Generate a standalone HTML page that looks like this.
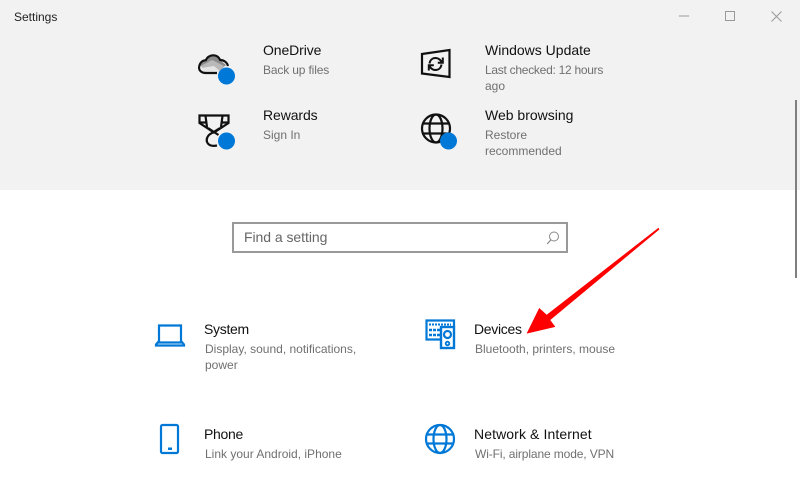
<!DOCTYPE html>
<html>
<head>
<meta charset="utf-8">
<style>
html,body{margin:0;padding:0;width:800px;height:500px;overflow:hidden;background:#fff}
body{position:relative;font-family:"Liberation Sans",sans-serif}
.t,.s{position:absolute;white-space:nowrap;line-height:16px}
.t{font-size:14px;color:#111}
.s{font-size:12px;color:#707070}
svg{position:absolute;left:0;top:0}
</style>
</head>
<body>
<div style="position:absolute;left:0;top:0;width:800px;height:190px;background:#f2f2f2"></div>
<div class="s" style="left:14px;top:9px;color:#222;font-size:12px">Settings</div>

<div class="t" style="left:263px;top:42px;letter-spacing:-.1px">OneDrive</div>
<div class="s" style="left:263px;top:62px;letter-spacing:-.15px">Back up files</div>
<div class="t" style="left:263px;top:107px;letter-spacing:-.1px">Rewards</div>
<div class="s" style="left:263px;top:127px">Sign In</div>
<div class="t" style="left:485px;top:42px">Windows Update</div>
<div class="s" style="left:485px;top:62px;letter-spacing:-.27px">Last checked: 12 hours</div>
<div class="s" style="left:485px;top:78px">ago</div>
<div class="t" style="left:485px;top:107px">Web browsing</div>
<div class="s" style="left:485px;top:127px">Restore</div>
<div class="s" style="left:485px;top:143px">recommended</div>

<div style="position:absolute;left:232px;top:222px;width:332px;height:27px;border:2px solid #999;background:#fff"></div>
<div style="position:absolute;left:244px;top:229px;font-size:14px;line-height:17px;color:#666;white-space:nowrap;letter-spacing:-.05px">Find a setting</div>

<div class="t" style="left:204px;top:321px;letter-spacing:-.3px">System</div>
<div class="s" style="left:205px;top:341px">Display, sound, notifications,</div>
<div class="s" style="left:205px;top:357px">power</div>
<div class="t" style="left:474px;top:321px;letter-spacing:-.3px">Devices</div>
<div class="s" style="left:475px;top:341px">Bluetooth, printers, mouse</div>
<div class="t" style="left:204px;top:426px;letter-spacing:-.3px">Phone</div>
<div class="s" style="left:205px;top:446px">Link your Android, iPhone</div>
<div class="t" style="left:474px;top:426px;letter-spacing:.1px">Network &amp; Internet</div>
<div class="s" style="left:475px;top:446px;letter-spacing:-.12px">Wi-Fi, airplane mode, VPN</div>

<svg width="800" height="500" viewBox="0 0 800 500" fill="none">
  <!-- window controls -->
  <path d="M679 16H689" stroke="#999" stroke-width="1"/>
  <rect x="725.5" y="11.5" width="9" height="9" stroke="#999" stroke-width="1"/>
  <path d="M771.5 11.5L781.500 21.500M781.500 11.500L771.500 21.500" stroke="#999" stroke-width="1"/>
  <!-- scrollbar -->
  <rect x="795" y="100" width="2" height="178" fill="#7f7f7f"/>

  <!-- OneDrive -->
  <path d="M201 66C200 61 204 60 206 60C208 55 217 54 220 60L226 65L218 72H206Z" fill="#8c8c8c"/>
  <path d="M201 66L212 60L224 66L218 72H204Z" fill="#b9b9b9"/>
  <path d="M201 68L214 66L221 72H204Z" fill="#e4e4e4"/>
  <path d="M217 73H206C200.500 73 198.500 69.500 199.200 66.500C200 62.500 202.500 60.500 205.800 60.200C208.500 54.500 217 53 220.200 60C223.500 60 227 62 228 66" stroke="#111" stroke-width="2.200"/>
  <circle cx="226.500" cy="76" r="8.500" fill="#0078d7"/>

  <!-- Rewards -->
  <path d="M199.500 115.500H228.500V123L214 132.500L199.500 123Z" stroke="#111" stroke-width="2.200" stroke-linejoin="miter"/>
  <path d="M205.500 116L207 127M222.500 116L221 127M200 122.500H206M222 122.500H228" stroke="#111" stroke-width="2.200"/>
  <path d="M208 128L218.500 135M220 128L212 133C207.500 135 206 139 207 142C208.500 145.500 212 146.500 217 145.500" stroke="#111" stroke-width="2.200"/>
  <circle cx="226.500" cy="141" r="8.500" fill="#0078d7"/>

  <!-- Windows Update -->
  <path d="M422 54L449.500 50V77L422 73.500Z" stroke="#111" stroke-width="2.200"/>
  <path d="M429.500 63.500C430 60 432.500 58 435.500 58C438 58 439.500 59 441 61L442.500 62.500M442.800 57.500V62.800H437.800" stroke="#111" stroke-width="2"/>
  <path d="M441.500 64.500C441 68 438.500 70 435.500 70C433 70 431.500 69 430 67L428.800 65.500M428.800 70.500V65.300H433.800" stroke="#111" stroke-width="2"/>

  <!-- Web browsing -->
  <circle cx="436" cy="128.500" r="14" stroke="#111" stroke-width="2.200"/>
  <ellipse cx="436" cy="128.500" rx="6.500" ry="14" stroke="#111" stroke-width="2.200"/>
  <path d="M423 123.500H449M423 133.500H449" stroke="#111" stroke-width="2.200"/>
  <circle cx="448.500" cy="141" r="8.500" fill="#0078d7"/>

  <!-- search icon -->
  <circle cx="554" cy="236.500" r="4.500" stroke="#888" stroke-width="1"/>
  <path d="M550.700 240L547.200 244" stroke="#888" stroke-width="1.200"/>

  <!-- System -->
  <path d="M159 325.500H181V342.500H159Z" stroke="#0078d7" stroke-width="2.200"/>
  <path d="M159 341L156 344.500V345.500H184V344.500L181 341" stroke="#0078d7" stroke-width="2.200"/>

  <!-- Devices -->
  <path d="M441 339.500H426.500V320.500H454V327" stroke="#0078d7" stroke-width="2.200"/>
  <path d="M429 324.500H451" stroke="#0078d7" stroke-width="2" stroke-dasharray="2 1"/>
  <path d="M429 330H441M429 335H441" stroke="#0078d7" stroke-width="2.500" stroke-dasharray="3 1"/>
  <rect x="441" y="327" width="13" height="21" fill="#fff" stroke="#0078d7" stroke-width="2.400"/>
  <circle cx="447.500" cy="334.500" r="3.500" stroke="#0078d7" stroke-width="2.200"/>
  <circle cx="447.500" cy="343.500" r="1.800" stroke="#0078d7" stroke-width="1.800"/>

  <!-- Phone -->
  <rect x="161" y="425" width="17" height="28" rx="1.500" stroke="#0078d7" stroke-width="2.200"/>
  <rect x="168" y="447.500" width="4" height="2.500" fill="#0078d7"/>

  <!-- Network -->
  <circle cx="440" cy="439" r="14" stroke="#0078d7" stroke-width="2.200"/>
  <ellipse cx="440" cy="439" rx="6.500" ry="14" stroke="#0078d7" stroke-width="2.200"/>
  <path d="M427 434.500H453M427 443.500H453" stroke="#0078d7" stroke-width="2.200"/>

  <!-- Red arrow -->
  <path d="M658.500 228L659 229.500L550 320L555 326.700L527 333.300L539.300 308.300L546.700 315Z" fill="#fe0000" stroke="#fe0000" stroke-width="0.500"/>
</svg>
</body>
</html>
